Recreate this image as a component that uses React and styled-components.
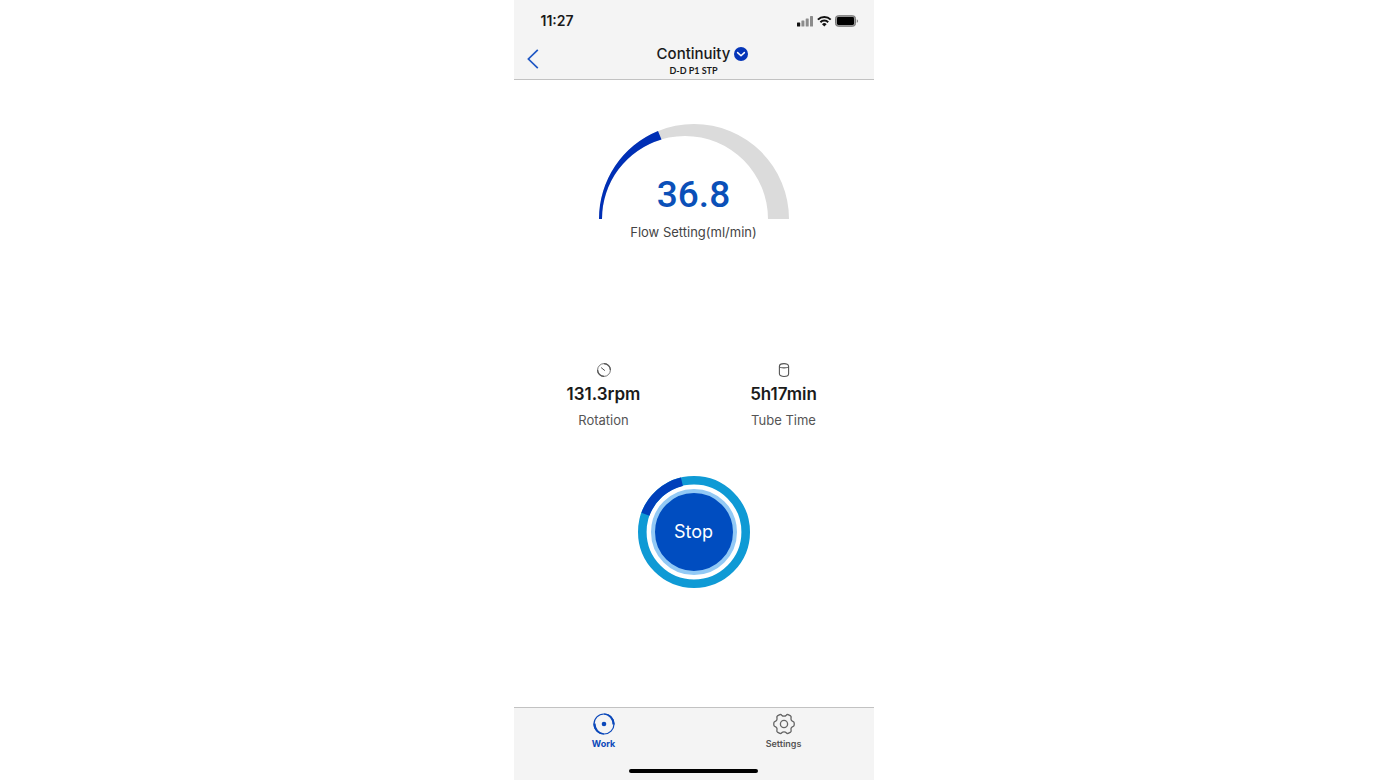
import React, { useState } from "react";
import styled, { createGlobalStyle } from "styled-components";

const App = () => {
  const [running, setRunning] = useState(true);
  return (
    <Page>
      <GlobalStyle />
      <Phone>
        <Header>
          <StatusBar>
            <Time>11:27</Time>
            <StatusIcons />
          </StatusBar>
          <NavBar>
            <BackButton type="button" aria-label="Back">
              <BackIcon />
            </BackButton>
            <TitleContainer>
              <ModeButton type="button">
                Continuity
                <ChevronIcon />
              </ModeButton>
              <SubTitle>D-D P1 STP</SubTitle>
            </TitleContainer>
          </NavBar>
        </Header>
        <Main>
          <GaugeContainer>
            <Gauge />
            <GaugeValue>36.8</GaugeValue>
          </GaugeContainer>
          <GaugeLabel>Flow Setting(ml/min)</GaugeLabel>
          <Stats>
            <Stat>
              <DialIcon />
              <StatValue>131.3rpm</StatValue>
              <StatLabel>Rotation</StatLabel>
            </Stat>
            <Stat>
              <TubeIcon />
              <StatValue>5h17min</StatValue>
              <StatLabel>Tube Time</StatLabel>
            </Stat>
          </Stats>
          <StopRing>
            <RingProgress />
            <StopButton type="button" onClick={() => setRunning(!running)}>
              {running ? "Stop" : "Start"}
            </StopButton>
          </StopRing>
        </Main>
        <Footer>
          <Tabs>
            <Tab href="#work" $active>
              <WorkIcon />
              Work
            </Tab>
            <Tab href="#settings">
              <SettingsIcon />
              Settings
            </Tab>
          </Tabs>
          <HomeIndicator />
        </Footer>
      </Phone>
    </Page>
  );
};

export default App;

const StatusIcons = () => (
  <svg width="62" height="12" viewBox="0 0 62 12" aria-hidden="true">
    <rect x="0" y="7.5" width="3.2" height="4" rx="0.6" fill="#111" />
    <rect x="4.4" y="5.5" width="3" height="6" rx="0.6" fill="#8c8c8c" />
    <rect x="8.7" y="3.5" width="3" height="8" rx="0.6" fill="#8c8c8c" />
    <rect x="13" y="1" width="3" height="10.5" rx="0.6" fill="#8c8c8c" />
    <g fill="none" stroke="#111" strokeWidth="2">
      <path d="M20.9 4.6a9 9 0 0 1 12.8 0" />
      <path d="M23.4 7.2a5.5 5.5 0 0 1 7.8 0" />
    </g>
    <path d="M27.3 11.6l-2.3-2.4a3.3 3.3 0 0 1 4.6 0z" fill="#111" />
    <rect x="38.5" y="0.7" width="20" height="10.6" rx="2.8" fill="#999" stroke="#777" />
    <rect x="40" y="2.1" width="17" height="7.8" rx="1.4" fill="#000" />
    <path d="M59.8 4.2c1.5.5 1.5 3.1 0 3.6z" fill="#777" />
  </svg>
);

const BackIcon = () => (
  <svg width="12" height="20" viewBox="0 0 12 20" fill="none" stroke="#1f57c4" strokeWidth="1.7">
    <path d="M10.8 0.8L1.4 10l9.4 9.2" />
  </svg>
);

const ChevronIcon = () => (
  <svg width="14" height="14" viewBox="0 0 14 14" fill="none" aria-hidden="true">
    <circle cx="7" cy="7" r="7" fill="#0535b8" />
    <path d="M3.6 5.6L7 8.8l3.4-3.2" stroke="#fff" strokeWidth="1.5" strokeLinecap="round" strokeLinejoin="round" />
  </svg>
);

const Gauge = () => (
  <svg width="190" height="95" viewBox="0 0 190 95" aria-hidden="true">
    <path d="M0 95A95 95 0 0 1 190 95H169A83 83 0 0 0 3 95z" fill="#dbdbdb" />
    <path d="M0 95A95 95 0 0 1 59 7L62.5 15.4A83 83 0 0 0 3 95z" fill="#002fb5" />
  </svg>
);

const DialIcon = () => (
  <svg width="16" height="16" viewBox="0 0 16 16" fill="none" stroke="#555" aria-hidden="true">
    <circle cx="8" cy="8" r="6.4" strokeWidth="0.8" />
    <path d="M8 1.6A6.4 6.4 0 0 1 14.4 8M8 14.4A6.4 6.4 0 0 1 1.6 8" strokeWidth="1.2" />
    <path d="M5.4 5.8l3.2 2.6" strokeWidth="1" strokeLinecap="round" />
  </svg>
);

const TubeIcon = () => (
  <svg width="16" height="16" viewBox="0 0 16 16" fill="none" stroke="#555" strokeWidth="1.1" aria-hidden="true">
    <path d="M3.4 4.4c0-3.7 9.2-3.7 9.2 0v7.3c0 3.7-9.2 3.7-9.2 0z" />
    <path d="M3.4 4.4c0 2 9.2 2 9.2 0" />
  </svg>
);

const RingProgress = () => (
  <RingSvg viewBox="0 0 112 112" fill="none" aria-hidden="true">
    <circle cx="56" cy="56" r="51.7" stroke="#0f9ad5" strokeWidth="8.6" />
    <path d="M7.4 38.3A51.7 51.7 0 0 1 43.9 5.7" stroke="#003fba" strokeWidth="8.6" />
  </RingSvg>
);

const WorkIcon = () => (
  <svg width="22" height="22" viewBox="0 0 22 22" aria-hidden="true">
    <circle cx="11" cy="11" r="10" fill="none" stroke="#0b48ba" strokeWidth="1.2" />
    <path d="M11 0.4A10.6 10.6 0 0 1 21.6 11.4H19.4A9.2 9.6 0 0 0 11 1.6z" fill="#0b48ba" />
    <path d="M11 21.6A10.6 10.6 0 0 1 0.4 10.6H2.6A9.2 9.6 0 0 0 11 20.4z" fill="#0b48ba" />
    <circle cx="11" cy="11" r="2.3" fill="#0b48ba" />
  </svg>
);

const SettingsIcon = () => (
  <svg width="22" height="22" viewBox="0 0 22 22" fill="none" stroke="#666" strokeWidth="1.3" strokeLinejoin="round" aria-hidden="true">
    <path d="M6.8 1.6Q8 1.2 8.7 2.2Q9.6 3.2 11 3.2T13.3 2.2Q14 1.2 15.2 1.6L17.6 2.9Q18.4 3.6 18.1 4.8Q17.7 6.2 18.3 7.2T20.2 8.6Q21.1 9 21.2 10V12Q21.1 13 20.2 13.4Q18.9 13.8 18.3 14.8T18.1 17.2Q18.4 18.4 17.6 19.1L15.2 20.4Q14 20.8 13.3 19.8Q12.4 18.8 11 18.8T8.7 19.8Q8 20.8 6.8 20.4L4.4 19.1Q3.6 18.4 3.9 17.2Q4.3 15.8 3.7 14.8T1.8 13.4Q0.9 13 0.8 12V10Q0.9 9 1.8 8.6Q3.1 8.2 3.7 7.2T3.9 4.8Q3.6 3.6 4.4 2.9z" />
    <circle cx="11" cy="11" r="3.6" />
  </svg>
);

const GlobalStyle = createGlobalStyle`
  * {
    box-sizing: border-box;
    margin: 0;
    padding: 0;
  }
  body {
    background-color: #fff;
    color: #1a1a1a;
    font-family: Inter, "Liberation Sans", sans-serif;
  }
  button {
    border: none;
    background: none;
    color: inherit;
    font-family: inherit;
    cursor: pointer;
  }
  svg {
    display: block;
    flex-shrink: 0;
  }
`;

const Page = styled.div`
  min-height: 100vh;
  display: flex;
  justify-content: center;
`;
const Phone = styled.div`
  width: 100%;
  max-width: 360px;
  display: flex;
  flex-direction: column;
`;
const Header = styled.header`
  background-color: #f4f4f4;
  border-bottom: 1px solid #c2c2c2;
`;
const StatusBar = styled.div`
  height: 42px;
  padding: 0 15px 0 27px;
  display: flex;
  align-items: center;
  justify-content: space-between;
`;
const Time = styled.span`
  font-size: 14px;
  line-height: 16px;
  font-weight: 600;
`;
const NavBar = styled.div`
  display: grid;
  grid-template-columns: 38px 1fr 38px;
  padding-bottom: 3px;
`;
const BackButton = styled.button`
  display: flex;
  align-items: center;
  justify-content: center;
`;
const TitleContainer = styled.div`
  display: flex;
  flex-direction: column;
  align-items: center;
`;
/* left padding balances the chevron so the word stays centred */
const ModeButton = styled.button`
  display: flex;
  align-items: center;
  gap: 4px;
  padding-left: 18px;
  font-size: 15px;
  line-height: 24px;
  font-weight: 500;
`;
const SubTitle = styled.p`
  font-family: Lato, "Open Sans", sans-serif;
  font-size: 9px;
  line-height: 10px;
  font-weight: 700;
`;
const Main = styled.main`
  flex: 1;
  padding: 44px 0;
  display: flex;
  flex-direction: column;
  align-items: center;
`;
const GaugeContainer = styled.div`
  display: grid;
  justify-items: center;
  align-items: end;
  & > * {
    grid-area: 1 / 1;
  }
`;
const GaugeValue = styled.p`
  color: #0b50b8;
  font-family: Roboto, Inter, sans-serif;
  font-size: 37px;
  line-height: 48px;
  font-weight: 500;
`;
const GaugeLabel = styled.p`
  margin-top: 4px;
  color: #444;
  font-size: 13px;
  line-height: 18px;
`;
const Stats = styled.section`
  width: 100%;
  margin: 121px 0 46px;
  display: grid;
  grid-template-columns: 1fr 1fr;
`;
const Stat = styled.div`
  display: flex;
  flex-direction: column;
  align-items: center;
  gap: 4px;
`;
const StatValue = styled.p`
  font-size: 17px;
  line-height: 24px;
  font-weight: 600;
`;
const StatLabel = styled.p`
  color: #555;
  font-size: 13px;
  line-height: 20px;
`;
const StopRing = styled.div`
  width: 112px;
  height: 112px;
  display: grid;
  place-items: center;
  & > * {
    grid-area: 1 / 1;
  }
`;
const RingSvg = styled.svg`
  width: 100%;
  height: 100%;
`;
const StopButton = styled.button`
  width: 86px;
  height: 86px;
  border: 4px solid #92c9f5;
  border-radius: 50%;
  background-color: #004dc0;
  color: #fff;
  font-size: 18px;
  line-height: 24px;
`;
const Footer = styled.footer`
  height: 73px;
  padding-bottom: 7px;
  background-color: #f4f4f4;
  border-top: 1px solid #c2c2c2;
  display: flex;
  flex-direction: column;
  align-items: center;
  justify-content: space-between;
`;
const Tabs = styled.nav`
  width: 100%;
  padding-top: 5px;
  display: grid;
  grid-template-columns: 1fr 1fr;
`;
const Tab = styled.a`
  display: flex;
  flex-direction: column;
  align-items: center;
  gap: 3px;
  color: ${(props) => (props.$active ? "#0b48ba" : "#555")};
  font-size: 9px;
  line-height: 12px;
  font-weight: ${(props) => (props.$active ? 700 : 600)};
  text-decoration: none;
`;
const HomeIndicator = styled.div`
  width: 129px;
  height: 4px;
  border-radius: 2px;
  background-color: #000;
`;
